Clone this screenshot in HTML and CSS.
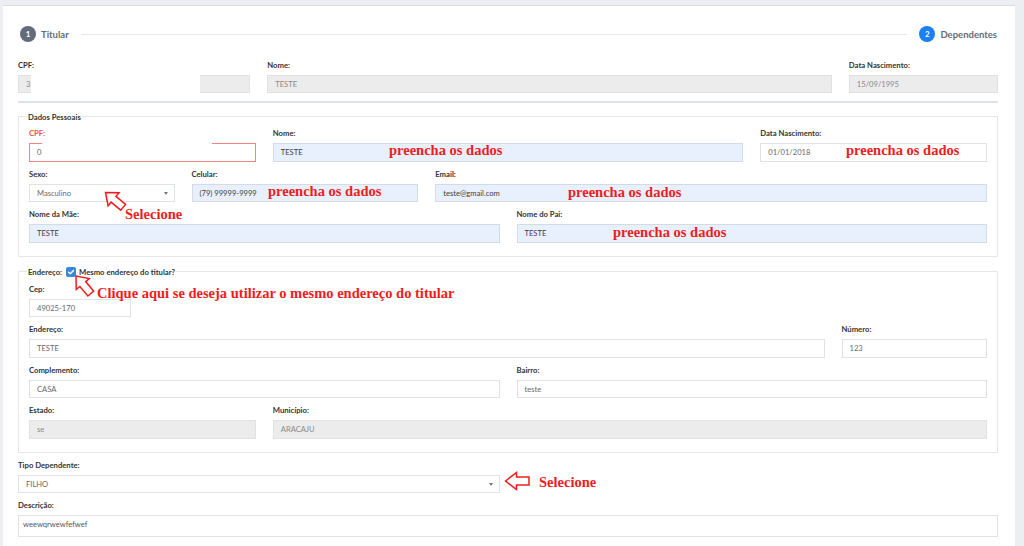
FILE: index.html
```html
<!DOCTYPE html>
<html lang="pt-BR">
<head>
<meta charset="utf-8">
<title>Cadastro de Dependente</title>
<link rel="stylesheet" href="styles.css">
</head>
<body>
<div class="page">
  <div class="card">
    <div class="stepper">
      <div class="step"><span class="num done">1</span><span class="step-label">Titular</span></div>
      <div class="step-line"></div>
      <div class="step"><span class="num active">2</span><span class="step-label">Dependentes</span></div>
    </div>

    <div class="grid">
      <div class="group c3"><span class="lbl">CPF:</span><div class="field ro">35</div></div>
      <div class="group c7"><span class="lbl">Nome:</span><div class="field ro">TESTE</div></div>
      <div class="group c2"><span class="lbl">Data Nascimento:</span><div class="field ro">15/09/1995</div></div>
    </div>

    <hr class="sep">

    <fieldset class="box box-pessoais">
      <legend>Dados Pessoais</legend>
      <div class="grid">
        <div class="group c3"><span class="lbl err">CPF:</span><div class="field err">06</div></div>
        <div class="group c6"><span class="lbl">Nome:</span><div class="field auto">TESTE</div></div>
        <div class="group c3"><span class="lbl">Data Nascimento:</span><div class="field">01/01/2018</div></div>

        <div class="group c2"><span class="lbl">Sexo:</span><div class="field select">Masculino<span class="caret"></span></div></div>
        <div class="group c3"><span class="lbl">Celular:</span><div class="field auto">(79) 99999-9999</div></div>
        <div class="group c7"><span class="lbl">Email:</span><div class="field auto">teste@gmail.com</div></div>

        <div class="group c6"><span class="lbl">Nome da Mãe:</span><div class="field auto">TESTE</div></div>
        <div class="group c6"><span class="lbl">Nome do Pai:</span><div class="field auto">TESTE</div></div>
      </div>
    </fieldset>

    <fieldset class="box box-endereco">
      <legend class="legend-check">Endereço: <span class="check"><svg viewBox="0 0 10 10" width="10" height="10"><path d="M2.6 5.2 L4.3 6.8 L7.5 3.4" fill="none" stroke="#fff" stroke-width="1.4" stroke-linecap="round" stroke-linejoin="round"/></svg></span> Mesmo endereço do titular?</legend>
      <div class="grid">
        <div class="group c12"><span class="lbl">Cep:</span><div class="field cep">49025-170</div></div>

        <div class="group c10"><span class="lbl">Endereço:</span><div class="field">TESTE</div></div>
        <div class="group c2"><span class="lbl">Número:</span><div class="field">123</div></div>

        <div class="group c6"><span class="lbl">Complemento:</span><div class="field">CASA</div></div>
        <div class="group c6"><span class="lbl">Bairro:</span><div class="field">teste</div></div>

        <div class="group c3"><span class="lbl">Estado:</span><div class="field ro">se</div></div>
        <div class="group c9"><span class="lbl">Município:</span><div class="field ro">ARACAJU</div></div>
      </div>
    </fieldset>

    <div class="grid">
      <div class="group c6"><span class="lbl">Tipo Dependente:</span><div class="field select">FILHO<span class="caret"></span></div></div>
      <div class="group c12"><span class="lbl">Descrição:</span><div class="field area">weewqrwewfefwef</div></div>
    </div>
  </div>

  <div class="mask mask-1"></div>
  <div class="mask mask-2"></div>

  <div class="notes">
    <span class="note n1">preencha os dados</span>
    <span class="note n2">preencha os dados</span>
    <span class="note n3">preencha os dados</span>
    <span class="note n4">preencha os dados</span>
    <span class="note n5">preencha os dados</span>
    <span class="note n6">Selecione</span>
    <span class="note n7">Clique aqui se deseja utilizar o mesmo endereço do titular</span>
    <span class="note n8">Selecione</span>
    <svg class="arrows" viewBox="0 0 1024 546" width="1024" height="546">
      <g fill="#fff" stroke="#f01c1c" stroke-width="1.5" stroke-linejoin="miter">
        <polygon transform="translate(105.5 192.5) rotate(40)" points="0,0 10.5,-8.5 10.5,-3.8 23,-3.8 23,3.8 10.5,3.8 10.5,8.5"/>
        <polygon transform="translate(76 276) rotate(50)" points="0,0 10.5,-8.5 10.5,-3.8 23,-3.8 23,3.8 10.5,3.8 10.5,8.5"/>
        <polygon transform="translate(505.5 481)" points="0,0 11,-8.5 11,-4 23.5,-4 23.5,4 11,4 11,8.5"/>
      </g>
    </svg>
  </div>
</div>
</body>
</html>
```

FILE: styles.css
```css
html, body {
  margin: 0;
  background: #eceef2;
  font-family: Lato, "Liberation Sans", Arial, sans-serif;
}

.page {
  position: relative;
  width: 1024px;
  height: 546px;
  overflow: hidden;
  box-sizing: border-box;
  padding: 5px 9px 0 3px;
}

.card {
  background: #fff;
  border-top: 1px solid #d9dce5;
  padding: 20px 17px 30px 15px;
}

/* stepper */
.stepper {
  display: flex;
  align-items: center;
  height: 16px;
  padding: 0 1px 0 2px;
  margin-bottom: 17.5px;
}
.step {
  display: flex;
  align-items: center;
  gap: 5px;
}
.num {
  width: 16px;
  height: 16px;
  border-radius: 50%;
  color: #fff;
  font-weight: 700;
  font-size: 8px;
  display: flex;
  align-items: center;
  justify-content: center;
}
.num.done { background: #626d79; }
.num.active { background: #1a80f3; }
.step-label {
  font-size: 9.5px;
  font-weight: 700;
  color: #636c75;
}
.step-line {
  flex: 1;
  height: 1px;
  background: #e6e7ea;
  margin: 0 12px;
}

/* grid */
.grid {
  display: grid;
  grid-template-columns: repeat(12, minmax(0, 1fr));
  column-gap: 17px;
}
.c2 { grid-column: span 2; }
.c3 { grid-column: span 3; }
.c6 { grid-column: span 6; }
.c7 { grid-column: span 7; }
.c9 { grid-column: span 9; }
.c10 { grid-column: span 10; }
.c12 { grid-column: span 12; }

.group { margin-bottom: 7px; }

.lbl {
  display: block;
  height: 11px;
  line-height: 11px;
  font-size: 7.7px;
  font-weight: 700;
  color: #333;
  margin-bottom: 4px;
  white-space: nowrap;
}
.lbl.err { color: #e9534c; }

.field {
  position: relative;
  box-sizing: border-box;
  height: 18.5px;
  border: 1px solid #dfe2e7;
  background: #fff;
  padding: 0 7px;
  font-size: 7.6px;
  color: #6a6a6a;
  display: flex;
  align-items: center;
  white-space: nowrap;
  overflow: hidden;
}
.field.ro {
  background: #ececec;
  border-color: #e1e1e1;
  color: #8a8a8a;
}
.field.auto {
  background: #e8f0fe;
  border-color: #d4dbe7;
  color: #3d3d3d;
}
.field.err { border-color: #f2837e; }
.field.cep { width: 102px; }
.field.area {
  height: 22px;
  align-items: flex-start;
  padding: 3px 4px 0;
  color: #555;
}
.caret {
  position: absolute;
  right: 6px;
  top: 7.5px;
  width: 0;
  height: 0;
  border-left: 2.5px solid transparent;
  border-right: 2.5px solid transparent;
  border-top: 3px solid #777;
}

.sep {
  border: 0;
  border-top: 2px solid #dfe2e7;
  margin: 0.5px 0 8px;
}

/* fieldsets */
.box {
  margin: 0;
  min-width: 0;
  border: 1px solid #e4e6ea;
  padding: 5.5px 10px 6px;
}
.box-pessoais { margin-bottom: 9px; }
.box-endereco {
  padding-top: 6px;
  margin-bottom: 7px;
}
.box legend {
  padding: 0 1px;
  margin-left: -2px;
  height: 12px;
  line-height: 12px;
  font-size: 7.7px;
  font-weight: 700;
  color: #333;
}
.legend-check {
  display: flex;
  align-items: center;
  gap: 3.5px;
}
.check {
  display: inline-flex;
  width: 10px;
  height: 10px;
  border-radius: 2px;
  background: #3b88d8;
}

/* redaction masks */
.mask {
  position: absolute;
  background: #fff;
}
.mask-1 { left: 31px; top: 72px; width: 169px; height: 22px; }
.mask-2 { left: 42px; top: 138px; width: 170px; height: 21px; }

/* annotations */
.notes {
  position: absolute;
  inset: 0;
  pointer-events: none;
}
.note {
  position: absolute;
  font-family: "Liberation Serif", "Times New Roman", serif;
  font-weight: 700;
  font-size: 14.5px;
  line-height: 16px;
  color: #f01c1c;
  white-space: nowrap;
}
.n1 { left: 389px; top: 142px; }
.n2 { left: 846px; top: 142px; }
.n3 { left: 268px; top: 183px; }
.n4 { left: 568px; top: 184px; }
.n5 { left: 613px; top: 224px; }
.n6 { left: 125px; top: 206px; }
.n7 { left: 97px; top: 285px; }
.n8 { left: 539px; top: 474px; }
.arrows {
  position: absolute;
  left: 0;
  top: 0;
}
```
